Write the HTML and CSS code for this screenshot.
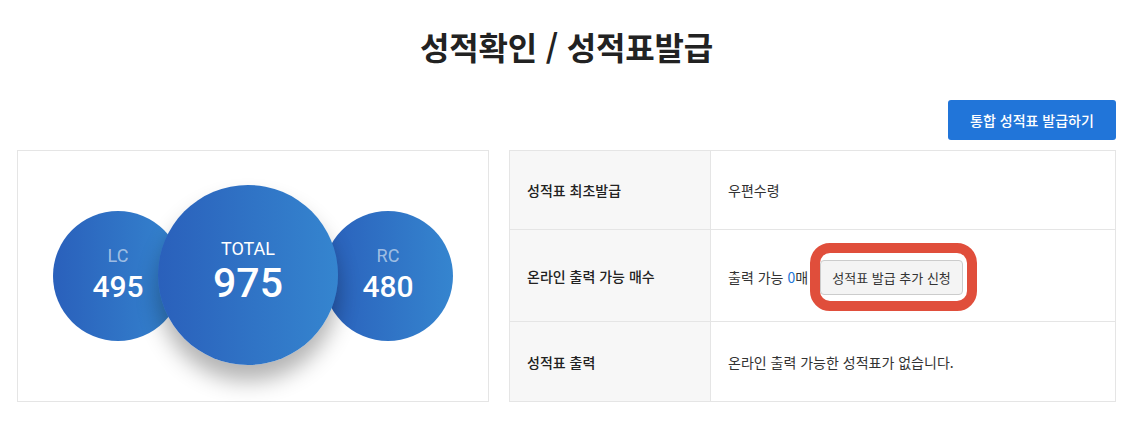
FILE: index.html
```html
<!DOCTYPE html>
<html lang="ko">
<head>
    <meta charset="UTF-8">
    <meta name="viewport" content="width=device-width, initial-scale=1.0">
    <title>성적확인 / 성적표발급</title>
    <link rel="stylesheet" href="styles.css">
</head>
<body>
    <div class="container">
        <h1 class="page-title">성적확인 / 성적표발급</h1>

        <div class="top-actions">
            <button type="button" class="btn-primary">통합 성적표 발급하기</button>
        </div>

        <div class="score-wrap">
            <div class="score-box">
                <div class="circle circle-side">
                    <span class="circle-label">LC</span>
                    <span class="circle-score">495</span>
                </div>
                <div class="circle circle-total">
                    <span class="circle-label">TOTAL</span>
                    <span class="circle-score">975</span>
                </div>
                <div class="circle circle-side circle-right">
                    <span class="circle-label">RC</span>
                    <span class="circle-score">480</span>
                </div>
            </div>

            <table class="info-table">
                <tr class="row-first">
                    <th>성적표 최초발급</th>
                    <td>우편수령</td>
                </tr>
                <tr class="row-count">
                    <th>온라인 출력 가능 매수</th>
                    <td>
                        <div class="count-line">
                            <span>출력 가능 <em class="count-num">0</em>매</span>
                            <span class="highlight">
                                <button type="button" class="btn-light">성적표 발급 추가 신청</button>
                            </span>
                        </div>
                    </td>
                </tr>
                <tr class="row-last">
                    <th>성적표 출력</th>
                    <td>온라인 출력 가능한 성적표가 없습니다.</td>
                </tr>
            </table>
        </div>
    </div>
</body>
</html>
```

FILE: styles.css
```css
:root{
    --cor_borda : #e5e5e5;
    --cor_azul : #2175d9;
    --cor_texto : #222;
}

body {
    font-family: "Noto Sans CJK KR", "Noto Sans", sans-serif;
    color: var(--cor_texto);
    background-color: #fff;
    margin: 0;
}

.container {
    width: 1100px;
    margin: 0 auto;
    padding: 0 0 0 1px;
    box-sizing: border-box;
}

.page-title {
    margin: 0;
    padding-top: 24px;
    font-size: 32px;
    line-height: 44px;
    font-weight: 700;
    text-align: center;
    letter-spacing: -0.2px;
}

.top-actions {
    display: flex;
    justify-content: flex-end;
    margin-top: 32px;
    margin-bottom: 10px;
}

.btn-primary {
    font-family: inherit;
    background-color: var(--cor_azul);
    color: #fff;
    font-size: 14px;
    font-weight: 500;
    width: 168px;
    height: 40px;
    border: none;
    border-radius: 3px;
    cursor: pointer;
}

.score-wrap {
    display: flex;
    gap: 20px;
}

.score-box {
    width: 472px;
    height: 252px;
    box-sizing: border-box;
    border: 1px solid var(--cor_borda);
    display: flex;
    justify-content: center;
    align-items: center;
}

.circle {
    border-radius: 50%;
    background: linear-gradient(90deg, #2a60bb, #3585cf);
    display: flex;
    flex-direction: column;
    align-items: center;
    justify-content: center;
    font-family: Roboto, "Liberation Sans", sans-serif;
    color: #fff;
}

.circle-side {
    width: 130px;
    height: 130px;
    margin-right: -25px;
    padding-bottom: 4px;
    box-sizing: border-box;
}

.circle-right {
    margin-right: 0;
    margin-left: -15px;
}

.circle-side .circle-label {
    font-size: 18px;
    line-height: 22px;
    margin-bottom: 3px;
    color: rgba(255, 255, 255, 0.55);
}

.circle-side .circle-score {
    font-size: 30px;
    line-height: 34px;
    font-weight: 500;
}

.circle-total {
    position: relative;
    z-index: 1;
    width: 180px;
    height: 180px;
    margin-top: -2px;
    box-shadow: 0 16px 22px rgba(0, 0, 0, 0.3);
}

.circle-total .circle-label {
    font-size: 18px;
    line-height: 22px;
}

.circle-total .circle-score {
    font-size: 41px;
    line-height: 46px;
    font-weight: 500;
    margin-bottom: 6px;
}

.info-table {
    flex: 1;
    border-collapse: collapse;
    font-size: 14px;
    color: #333;
}

.info-table th,
.info-table td {
    border: 1px solid var(--cor_borda);
    text-align: left;
    padding: 0 17px;
}

.info-table th {
    width: 166px;
    background-color: #f7f7f7;
    color: var(--cor_texto);
    font-weight: 500;
}

.row-first { height: 79px; }
.row-count { height: 92px; }
.row-last { height: 80px; }

.count-line {
    display: flex;
    align-items: center;
    padding-top: 2px;
}

.count-num {
    font-style: normal;
    color: var(--cor_azul);
}

.highlight {
    display: inline-block;
    border: 10px solid #e04e3b;
    border-radius: 20px;
    padding: 7px 4px 6px 0;
    margin-left: 2px;
    background-color: #fff;
}

.btn-light {
    display: block;
    font-family: inherit;
    font-size: 13px;
    color: #333;
    background-color: #f4f4f4;
    border: 1px solid #ccc;
    border-radius: 4px;
    width: 143px;
    height: 35px;
    padding: 0;
    cursor: pointer;
}
```
